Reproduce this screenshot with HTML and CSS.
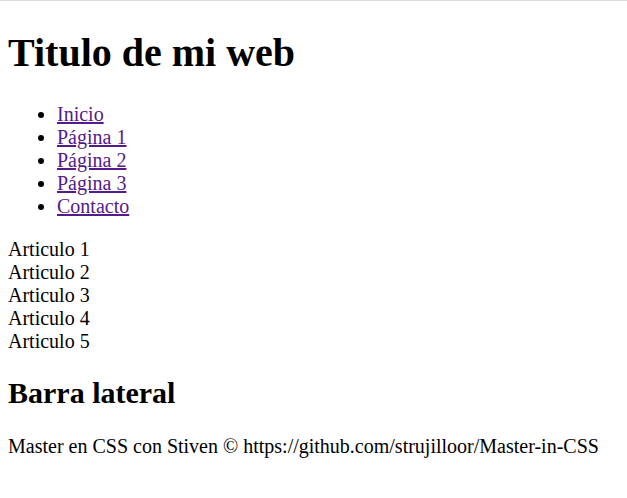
FILE: index.html
```html
<!DOCTYPE html>
<html lang="es">
<head>
<meta charset="utf-8">
<title>Titulo de mi web</title>
<link rel="stylesheet" href="styles.css">
</head>
<body>
<header class="header">
  <h1 class="title">Titulo de mi web</h1>
</header>
<nav class="nav">
  <ul class="menu">
    <li><a href="#">Inicio</a></li>
    <li><a href="#">Página 1</a></li>
    <li><a href="#">Página 2</a></li>
    <li><a href="#">Página 3</a></li>
    <li><a href="#">Contacto</a></li>
  </ul>
</nav>
<section class="content">
  <article class="article">Articulo 1</article>
  <article class="article">Articulo 2</article>
  <article class="article">Articulo 3</article>
  <article class="article">Articulo 4</article>
  <article class="article">Articulo 5</article>
</section>
<aside class="sidebar">
  <h2 class="sidebar-title">Barra lateral</h2>
</aside>
<footer class="footer">
  <p>Master en CSS con Stiven © https://github.com/strujilloor/Master-in-CSS</p>
</footer>
</body>
</html>
```
FILE: styles.css
```css
html {
  border-top: 1px solid #dadce0;
}
body {
  margin: 8px;
  font-family: "Liberation Serif", "Times New Roman", serif;
  font-size: 20px;
  color: #000;
}
.title {
  font-size: 40px;
  margin: 19.8px 0 26.8px;
}
.menu {
  margin: 20px 0;
  padding-left: 49px;
}
.menu a {
  color: #551a8b;
}
.sidebar-title {
  font-size: 30px;
  margin: 23px 0 25px;
}
.footer p {
  margin: 20px 0;
}
```
